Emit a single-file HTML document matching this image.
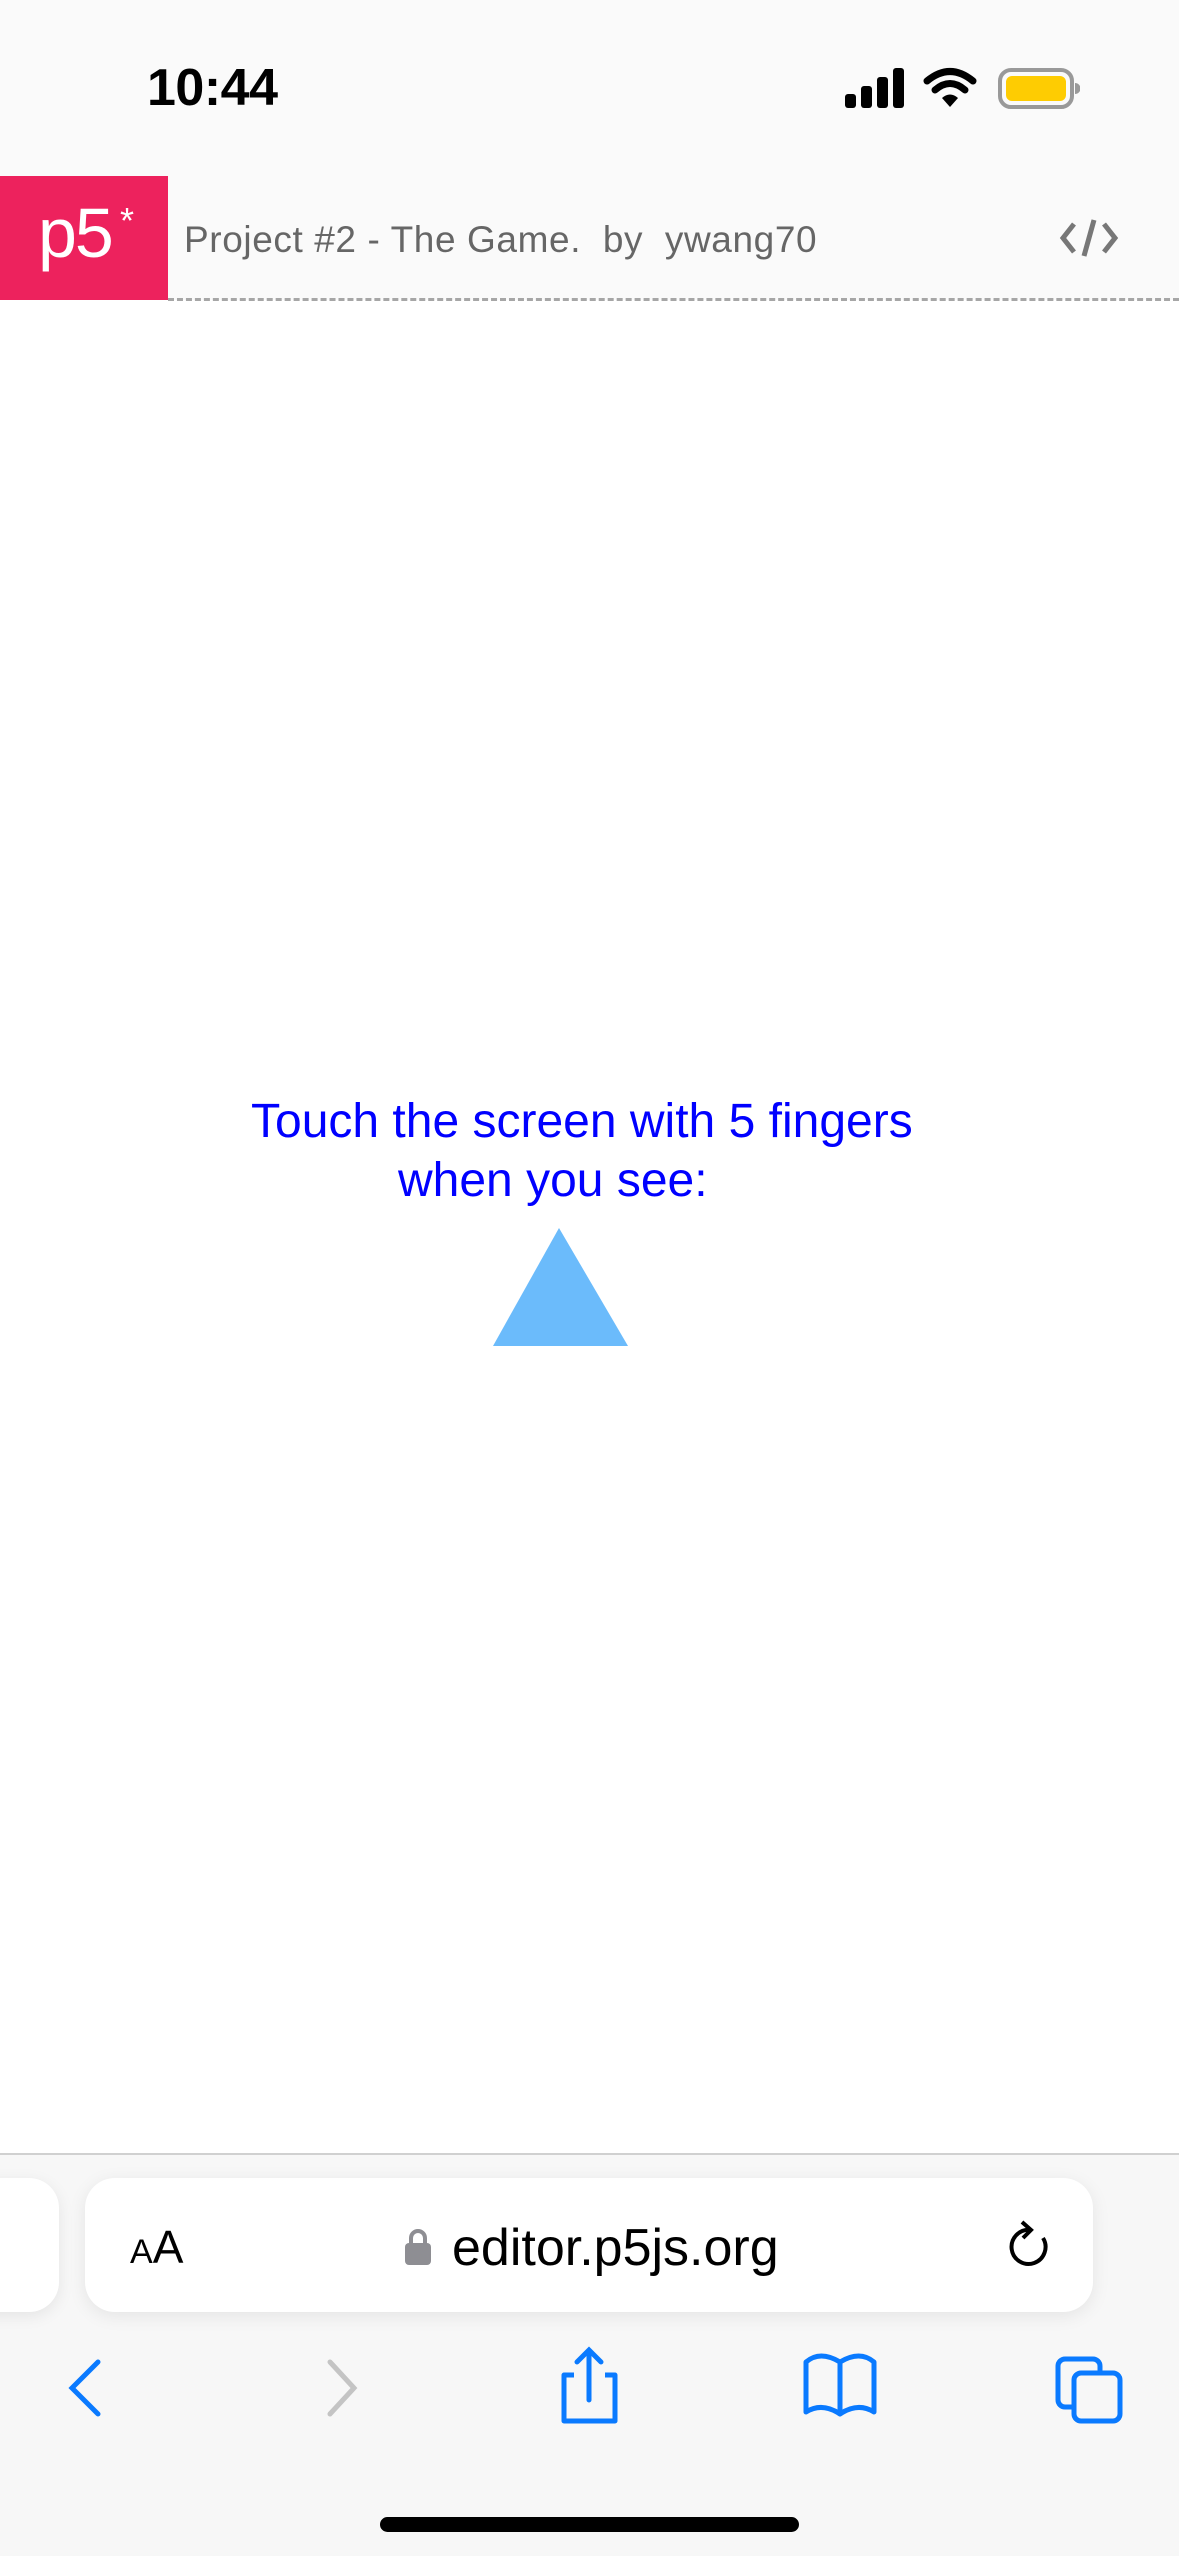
<!DOCTYPE html>
<html><head><meta charset="utf-8"><style>
*{margin:0;padding:0;box-sizing:border-box}
body{width:1179px;height:2556px;position:relative;background:#fff;font-family:"Liberation Sans",Arial,sans-serif;overflow:hidden}
.abs{position:absolute}
</style></head><body>
<div class="abs" style="left:0;top:0;width:1179px;height:300px;background:#fafafa"></div>
<div class="abs" style="left:147px;top:58px;font-size:52px;font-weight:bold;color:#000;letter-spacing:-0.5px">10:44</div>
<svg class="abs" style="left:840px;top:64px" width="240" height="46" viewBox="0 0 240 46">
<rect x="5" y="30" width="11" height="14" rx="3" fill="#000"/>
<rect x="21" y="22" width="11" height="22" rx="3" fill="#000"/>
<rect x="37" y="13" width="11" height="31" rx="3" fill="#000"/>
<rect x="53" y="4" width="11" height="40" rx="3" fill="#000"/>
<path d="M87 17 Q110 -2 133 17" stroke="#000" stroke-width="7" fill="none" stroke-linecap="round"/>
<path d="M95 26 Q110 13 125 26" stroke="#000" stroke-width="7" fill="none" stroke-linecap="round"/>
<path d="M102 34 L110 43 L118 34 Q110 27 102 34Z" fill="#000"/>
<rect x="160" y="6" width="72" height="37" rx="11" fill="none" stroke="#999" stroke-width="4"/>
<rect x="166" y="12" width="60" height="25" rx="6" fill="#fecc02"/>
<path d="M235 19 v11 a5 5 0 0 0 0 -11z" fill="#999"/>
</svg>
<div class="abs" style="left:0;top:176px;width:168px;height:124px;background:#ed225d"></div>
<div class="abs" style="left:38px;top:198px;font-size:70px;color:#fff;line-height:1;letter-spacing:-2px">p5</div>
<div class="abs" style="left:120px;top:203px;font-size:36px;color:#fff;line-height:1">*</div>
<div class="abs" style="left:184px;top:221px;font-size:37px;color:#666;line-height:1;letter-spacing:0.6px;white-space:nowrap">Project #2 - The Game.&nbsp; by&nbsp; ywang70</div>
<svg class="abs" style="left:1058px;top:218px" width="62" height="40" viewBox="0 0 62 40">
<path d="M16 6 L5 20 L16 34 M46 6 L57 20 L46 34 M36 2 L26 38" stroke="#777" stroke-width="5" fill="none"/>
</svg>
<div class="abs" style="left:168px;top:298px;width:1011px;border-top:3px dashed #a6a6a6"></div>
<div class="abs" style="left:0;top:1098px;width:1179px;font-size:48px;color:#0000ff;line-height:1"><span style="position:absolute;left:251px;white-space:nowrap">Touch the screen with 5 fingers</span><span style="position:absolute;left:398px;top:59px;white-space:nowrap">when you see:</span></div>
<svg class="abs" style="left:490px;top:1226px" width="140" height="122"><polygon points="69,2 3,120 138,120" fill="#6bbbfb"/></svg>
<div class="abs" style="left:0;top:2153px;width:1179px;height:403px;background:#f7f7f7;border-top:2px solid #d0d0d0"></div>
<div class="abs" style="left:-40px;top:2178px;width:99px;height:134px;background:#fff;border-radius:30px;box-shadow:0 4px 16px rgba(0,0,0,.08)"></div>
<div class="abs" style="left:85px;top:2178px;width:1008px;height:134px;background:#fff;border-radius:30px;box-shadow:0 4px 18px rgba(0,0,0,.08)"></div>
<div class="abs" style="left:130px;top:2224px;color:#000;line-height:1"><span style="font-size:34px">A</span><span style="font-size:46px">A</span></div>
<svg class="abs" style="left:403px;top:2226px" width="30" height="40"><path d="M8 18 v-6 a7 7 0 0 1 14 0 v6" stroke="#8e8e93" stroke-width="4" fill="none"/><rect x="2" y="17" width="26" height="22" rx="4" fill="#8e8e93"/></svg>
<div class="abs" style="left:452px;top:2222px;font-size:52px;color:#000;line-height:1">editor.p5js.org</div>
<svg class="abs" style="left:1000px;top:2214px" width="56" height="60"><path d="M30 16 A17 17 0 1 0 43 24" stroke="#000" stroke-width="4" fill="none"/><path d="M22 8 L31 16 L23 24" stroke="#000" stroke-width="4" fill="none"/></svg>
<svg class="abs" style="left:0;top:2340px" width="1179" height="90">
<path d="M98 22 L72 48 L98 74" stroke="#0a7aff" stroke-width="5" fill="none" stroke-linecap="round"/>
<path d="M330 22 L354 48 L330 74" stroke="#c4c4c4" stroke-width="5" fill="none" stroke-linecap="round"/>
<path d="M574 35 h-10 v46 h51 v-46 h-10" stroke="#0a7aff" stroke-width="5" fill="none" stroke-linejoin="round"/>
<path d="M589 60 V10 M577 22 L589 10 L601 22" stroke="#0a7aff" stroke-width="5" fill="none" stroke-linecap="round"/>
<path d="M806 72 V22 Q820 10 840 22 Q860 10 874 22 V72 Q858 62 840 74 Q822 62 806 72Z M840 22 V74" stroke="#0a7aff" stroke-width="5" fill="none" stroke-linejoin="round"/>
<rect x="1058" y="19" width="42" height="48" rx="7" stroke="#0a7aff" stroke-width="5" fill="#f7f7f7"/>
<rect x="1074" y="33" width="46" height="48" rx="7" stroke="#0a7aff" stroke-width="5" fill="#f7f7f7"/>
</svg>
<div class="abs" style="left:380px;top:2517px;width:419px;height:15px;background:#000;border-radius:8px"></div>
</body></html>
